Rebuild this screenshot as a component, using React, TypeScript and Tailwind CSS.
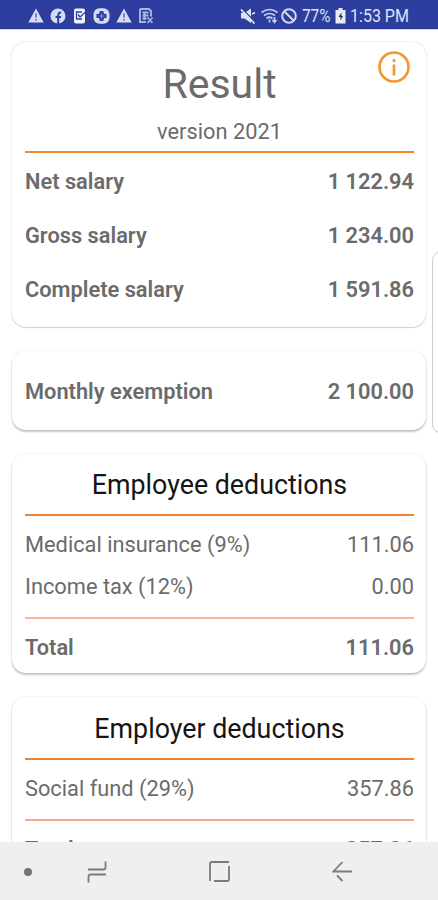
import type { ReactNode } from "react";

const summary = [
  { label: "Net salary", value: "1 122.94" },
  { label: "Gross salary", value: "1 234.00" },
  { label: "Complete salary", value: "1 591.86" },
];

const employee = [
  { label: "Medical insurance (9%)", value: "111.06" },
  { label: "Income tax (12%)", value: "0.00" },
];

function WarningIcon() {
  return (
    <svg width="16" height="15" viewBox="0 0 16 15">
      <path d="M8 0.500L15.700 14.500H0.300Z" fill="#d5daf5" />
      <path d="M8 5.500v4M8 11v1.600" stroke="#5a66b4" strokeWidth="1.600" />
    </svg>
  );
}

function StatusBar() {
  return (
    <div className="flex h-[29px] shrink-0 items-center justify-between bg-[#2e3e9e] pl-7 pr-[28px] pt-0.5">
      <div className="flex items-center gap-[6px]">
        <WarningIcon />
        <svg width="16" height="16" viewBox="0 0 16 16">
          <circle cx="8" cy="8" r="7.500" fill="#d5daf5" />
          <path d="M8.200 16V7.200c0-1.800.9-2.700 3-2.600M5.500 9h5.500" stroke="#2f3f9f" strokeWidth="2" fill="none" />
        </svg>
        <svg width="15" height="16" viewBox="0 0 15 16">
          <rect x="2" y="0.500" width="11" height="15" rx="2" fill="#f1f3fd" />
          <path d="M10 4H4.500v7h5.500M6 6.500l2 2.500L14 3.500" stroke="#2f3f9f" strokeWidth="1.300" fill="none" />
        </svg>
        <svg width="17" height="16" viewBox="0 0 17 16">
          <rect x="0.500" y="0.300" width="16" height="15.400" rx="6" fill="#d5daf5" />
          <path d="M8.500 3v10M3.500 8h10" stroke="#2f3f9f" strokeWidth="4" />
          <circle cx="8.500" cy="8" r="3.400" fill="#2f3f9f" />
          <path d="M8.500 5.500v5M6 8h5" stroke="#7f89cb" strokeWidth="1" />
        </svg>
        <WarningIcon />
        <svg width="16" height="16" viewBox="0 0 16 16" className="text-[#aab2e0]">
          <path d="M2 1h9l2 2v5.500M8 14H2V1M4.500 4.500h6M4.500 7.500h6M4.500 10.500h4M6.500 4v8" stroke="currentColor" strokeWidth="1.900" fill="none" />
          <path d="M9.500 9.500l5 5.500M14.500 9.500l-5 5.500" stroke="currentColor" strokeWidth="1.700" />
        </svg>
      </div>
      <div className="flex items-center text-[#dfe3f8]">
        <svg width="16" height="16" viewBox="0 0 16 16" className="mr-[5px]">
          <path d="M1 5h3.500L11 0.500v14.500l-6.500-4.500H1Z" fill="currentColor" />
          <path d="M2 0.500l13 13.500" stroke="#2e3e9e" strokeWidth="1.200" />
          <path d="M1 1.500l13.500 14" stroke="currentColor" strokeWidth="1.800" />
          <path d="M12 6l3-1.500" stroke="currentColor" strokeWidth="1.500" />
        </svg>
        <svg width="18" height="16" viewBox="0 0 18 16" className="mr-[2px]" fill="none" stroke="#c3caee" strokeWidth="1.700">
          <path d="M0.500 4.500Q8.500-1.500 16.500 4.500M3 7.500Q8.500 3.500 14 7.500M5.500 10.500Q8.500 8 11.500 10.500" />
          <path d="M8.500 11.500v3M13.500 9v5M11.500 12l2 2.500 2-2.500" />
        </svg>
        <svg width="16" height="16" viewBox="0 0 16 16" className="mr-[5px]" fill="none" stroke="#d0d6f4" strokeWidth="2">
          <circle cx="8" cy="8" r="6.800" />
          <path d="M3.200 3.200l9.600 9.600" />
        </svg>
        <span className="w-[29px] origin-left scale-x-[.85] text-[18px] leading-none whitespace-nowrap">77%</span>
        <svg width="11" height="16" viewBox="0 0 11 16" className="ml-[4px] mr-[4px]">
          <path d="M3.500 0h4v2H10.500v13.500H0.500V2h3Z" fill="#e9ebf8" />
          <path d="M6.500 4.500L3.500 9h2v3.500l2.500-4.500H6.500Z" fill="#2b3051" />
        </svg>
        <span className="w-[60px] origin-left scale-x-[.89] text-[18px] leading-none whitespace-nowrap">1:53 PM</span>
      </div>
    </div>
  );
}

function Card({ className, children }: { className: string; children: ReactNode }) {
  return (
    <section
      className={`relative shrink-0 rounded-[14px] bg-white pl-[13px] pr-3 ${className}`}
    >
      {children}
    </section>
  );
}

function Row({ label, value, className = "" }: { label: string; value: string; className?: string }) {
  return (
    <div className={`flex items-center justify-between whitespace-nowrap text-[21.800px] ${className}`}>
      <span>{label}</span>
      <span>{value}</span>
    </div>
  );
}

function NavBar() {
  return (
    <nav className="grid h-[58px] shrink-0 grid-cols-[56px_82px_163px_82px_1fr] items-center justify-items-center bg-[#efefef] pt-px text-[#7b7b7b]">
      <span className="size-2 rounded-full bg-[#757575]" />
      <svg width="20" height="22" viewBox="0 0 20 22" fill="none" stroke="currentColor" strokeWidth="1.800">
        <path d="M1 8.500h15.500q2 0 2-2V0.500M19 13.500H3.500q-2 0-2 2v6" />
      </svg>
      <svg width="21" height="21" viewBox="0 0 21 21" fill="none" stroke="currentColor" strokeWidth="1.800">
        <path d="M1 20V3q0-2 2-2h17M20 5v13q0 2-2 2H5" />
      </svg>
      <svg width="21" height="21" viewBox="0 0 21 21" fill="none" stroke="currentColor" strokeWidth="1.800">
        <path d="M20 10.500H1.500L10.500 1M5 14.500l5.500 5.500" />
      </svg>
    </nav>
  );
}

export default function App() {
  return (
    <div className="relative flex h-[900px] w-[438px] flex-col overflow-hidden bg-white font-['Roboto',sans-serif] text-[#6b6b6b]">
      <StatusBar />
      <main className="flex min-h-0 flex-1 flex-col gap-6 overflow-hidden border-t border-[#d5d9ef] px-3 pt-3">
        <Card className="h-[285px] shadow-[0_0_2px_rgba(0,0,0,0.18),0_1px_1px_rgba(0,0,0,0.14)]">
          <svg width="32" height="32" viewBox="0 0 32 32" className="absolute right-4 top-[9px]" fill="none" stroke="#f3962b" strokeWidth="2.600">
            <circle cx="16" cy="16" r="14.500" />
            <path d="M16 13.500v11M16 8v3" />
          </svg>
          <div className="flex h-[111px] flex-col items-center border-b-2 border-[#ef8a25]">
            <h1 className="mt-[18px] text-[41px] leading-[48px]">Result</h1>
            <p className="mt-[11px] text-[21.800px] leading-[26px]">version 2021</p>
          </div>
          <div className="pt-[2px]">
            {summary.map((item) => (
              <Row key={item.label} {...item} className="h-[54px] font-semibold" />
            ))}
          </div>
        </Card>

        <Card className="h-[79px] pt-[14px] shadow-[0_0_2px_rgba(0,0,0,0.12),0_2px_2px_rgba(0,0,0,0.22)]">
          <Row label="Monthly exemption" value="2 100.00" className="h-[54px] font-semibold" />
        </Card>

        <Card className="h-[219px] shadow-[0_0_2px_rgba(0,0,0,0.12),0_2px_2px_rgba(0,0,0,0.22)]">
          <h2 className="h-[62px] border-b-2 border-[#ee8136] text-center text-[26.800px] leading-[62px] text-[#151515]">
            Employee deductions
          </h2>
          <div className="h-[103px] border-b-2 border-[#f8b79d] pt-2">
            {employee.map((item) => (
              <Row key={item.label} {...item} className="h-[42px]" />
            ))}
          </div>
          <Row label="Total" value="111.06" className="h-[59px] font-semibold" />
        </Card>

        <Card className="h-[177px] shadow-[0_0_2px_rgba(0,0,0,0.12),0_2px_2px_rgba(0,0,0,0.22)]">
          <h2 className="h-[63px] border-b-2 border-[#ee8136] text-center text-[26.800px] leading-[64px] text-[#151515]">
            Employer deductions
          </h2>
          <div className="h-[61px] border-b-2 border-[#f8a890] pt-2">
            <Row label="Social fund (29%)" value="357.86" className="h-[42px]" />
          </div>
          <Row label="Total" value="357.86" className="h-[58px] font-semibold" />
        </Card>
      </main>
      <NavBar />
      {/* edge panel handle */}
      <div className="absolute -right-3 top-[252px] h-[181px] w-[18px] rounded-lg border border-[#cfcfcf] bg-white" />
    </div>
  );
}
